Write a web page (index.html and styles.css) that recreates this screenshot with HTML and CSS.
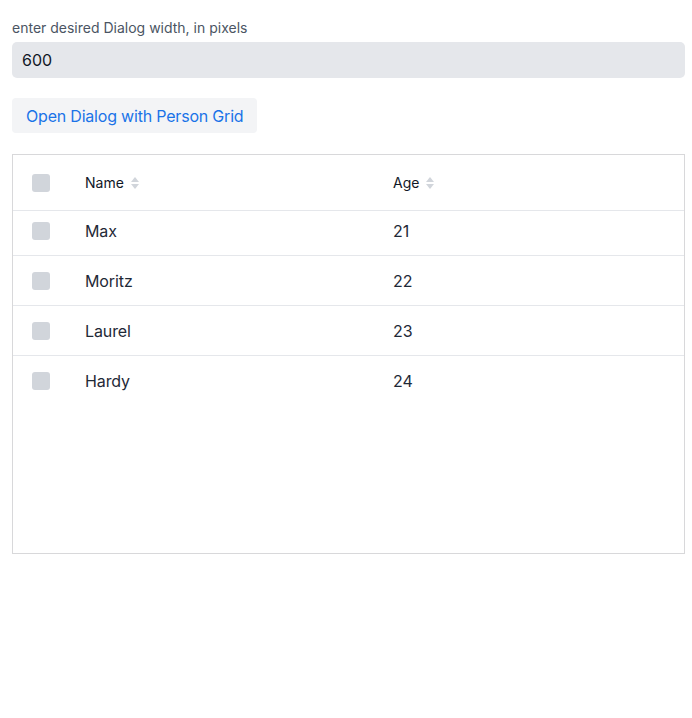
FILE: index.html
```html
<!DOCTYPE html>
<html>
<head>
<meta charset="utf-8">
<link rel="stylesheet" href="styles.css">
</head>
<body>
<div class="page">
  <label class="field-label" for="width">enter desired Dialog width, in pixels</label>
  <input class="field-input" id="width" type="text" value="600">
  <button class="open-btn">Open Dialog with Person Grid</button>
  <div class="grid">
    <div class="row head">
      <div class="cell check"><span class="box"></span></div>
      <div class="cell name">Name <svg class="sort" width="10" height="14" viewBox="0 0 10 14"><path d="M5 1 L9 6 H1 Z" fill="#d1d5db"/><path d="M5 13 L9 8 H1 Z" fill="#d1d5db"/></svg></div>
      <div class="cell age">Age <svg class="sort" width="10" height="14" viewBox="0 0 10 14"><path d="M5 1 L9 6 H1 Z" fill="#d1d5db"/><path d="M5 13 L9 8 H1 Z" fill="#d1d5db"/></svg></div>
    </div>
    <div class="row first">
      <div class="cell check"><span class="box"></span></div>
      <div class="cell name">Max</div>
      <div class="cell age">21</div>
    </div>
    <div class="row">
      <div class="cell check"><span class="box"></span></div>
      <div class="cell name">Moritz</div>
      <div class="cell age">22</div>
    </div>
    <div class="row">
      <div class="cell check"><span class="box"></span></div>
      <div class="cell name">Laurel</div>
      <div class="cell age">23</div>
    </div>
    <div class="row last">
      <div class="cell check"><span class="box"></span></div>
      <div class="cell name">Hardy</div>
      <div class="cell age">24</div>
    </div>
  </div>
</div>
</body>
</html>
```
FILE: styles.css
```css
html, body {
  margin: 0;
  padding: 0;
  background: #fff;
}

body {
  font-family: Inter, "Liberation Sans", sans-serif;
  color: #1f2937;
}

.page {
  padding: 19px 7px 0 12px;
  display: flex;
  flex-direction: column;
  align-items: flex-start;
}

.field-label {
  font-size: 14px;
  color: #4b5563;
  line-height: 18px;
  margin-bottom: 5px;
}

.field-input {
  box-sizing: border-box;
  width: 100%;
  height: 36px;
  border: none;
  border-radius: 5px;
  background: #e5e7eb;
  padding: 0 10px;
  font-family: inherit;
  font-size: 16px;
  color: #111827;
  outline: none;
}

.open-btn {
  margin-top: 20px;
  height: 35px;
  padding: 0 14px;
  border: none;
  border-radius: 4px;
  background: #f3f4f6;
  color: #1a73e8;
  font-family: inherit;
  font-size: 16px;
  letter-spacing: -0.2px;
}

.grid {
  margin-top: 21px;
  box-sizing: border-box;
  width: 100%;
  height: 400px;
  border: 1px solid #d8d8da;
}

.row {
  display: grid;
  grid-template-columns: 72px 308px 1fr;
  height: 49px;
  border-bottom: 1px solid #e5e7eb;
  align-items: center;
  font-size: 16px;
  letter-spacing: -0.1px;
  color: #1f2937;
}

.row.head {
  height: 55px;
  font-size: 14px;
  font-weight: 400;
  color: #111827;
  letter-spacing: 0;
}

.row.first {
  box-sizing: border-box;
  height: 45px;
  padding-bottom: 5px;
}

.row.last {
  border-bottom: none;
}

.cell.check {
  padding-left: 19px;
  display: flex;
  align-items: center;
}

.box {
  display: inline-block;
  width: 18px;
  height: 18px;
  border-radius: 3px;
  background: #d1d5db;
}

.cell.name, .cell.age {
  display: flex;
  align-items: center;
  gap: 6px;
}
```
